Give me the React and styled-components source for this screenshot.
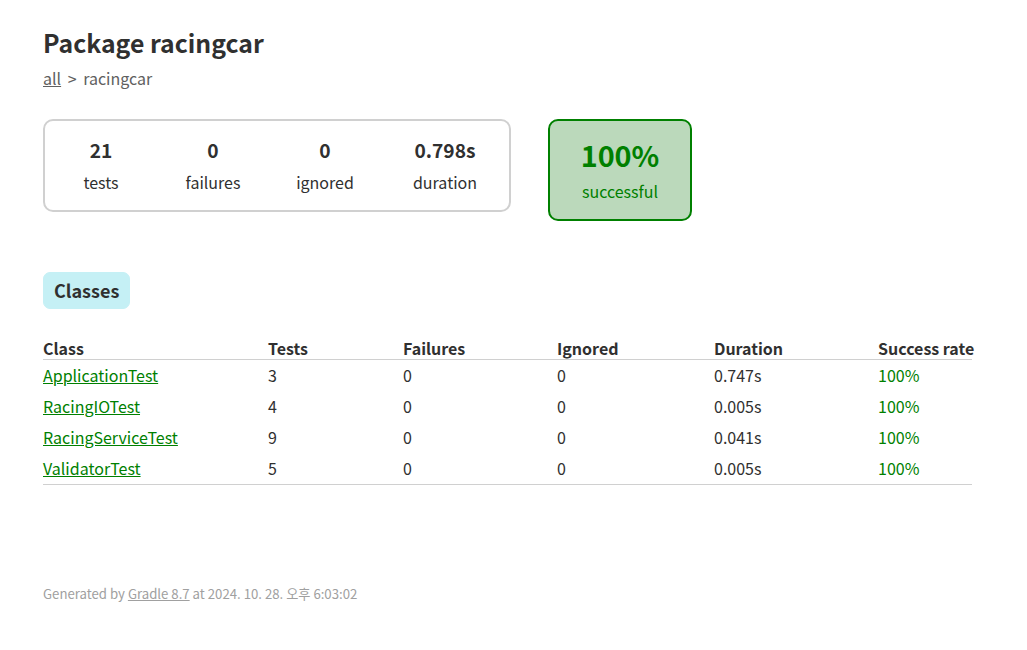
import React from "react";
import styled, { createGlobalStyle } from "styled-components";

const GlobalStyle = createGlobalStyle`
  html, body { margin: 0; padding: 0; background: #ffffff; }
  body {
    font-family: "Noto Sans CJK KR", "Noto Sans", sans-serif;
    font-size: 16px;
    color: #303030;
  }
`;

const Content = styled.div`
  padding: 24px 43px 30px 43px;
`;

const Title = styled.h1`
  margin: 0;
  font-size: 24.8px;
  line-height: 36px;
  font-weight: 700;
  white-space: nowrap;
`;

const Breadcrumbs = styled.div`
  margin-top: 7px;
  color: #606060;
  line-height: 22px;
  word-spacing: 3px;
  a { color: #606060; text-decoration: underline; }
`;

const Summary = styled.div`
  display: flex;
  align-items: flex-start;
  margin-top: 30px;
`;

const SummaryGroup = styled.div`
  display: flex;
  border: solid 2px #d0d0d0;
  border-radius: 10px;
`;

const InfoBox = styled.div`
  width: ${(p) => p.$w || 110}px;
  margin: 1px;
  padding: 16px 0;
  text-align: center;
  color: ${(p) => (p.$success ? "#008000" : "#303030")};
`;

const Counter = styled.div`
  font-size: ${(p) => (p.$big ? "28.8px" : "19.2px")};
  line-height: ${(p) => (p.$big ? "34px" : "25px")};
  font-weight: 700;
  margin-bottom: 8px;
`;

const Label = styled.div`
  line-height: 22px;
`;

const SuccessRate = styled.div`
  margin-left: 37px;
  border: solid 2px #008000;
  border-radius: 10px;
  background-color: #bbd9bb;
`;

const TabLinks = styled.ul`
  display: flex;
  margin: 0;
  padding: 51px 0 0 0;
  list-style: none;
`;

const Tab = styled.li`
  padding: 5px 10px;
  border-radius: 7px;
  border: solid 1px #c5f0f5;
  background-color: #c5f0f5;
`;

const TabTitle = styled.h2`
  margin: 0;
  font-size: 18px;
  line-height: 25px;
  font-weight: 700;
  white-space: nowrap;
`;

const Table = styled.table`
  margin-top: 29px;
  border-collapse: collapse;
  table-layout: fixed;
  width: 929px;
  border-bottom: solid #d0d0d0 1px;
`;

const Th = styled.th`
  width: ${(p) => p.$w}px;
  padding: 0;
  text-align: left;
  white-space: nowrap;
  font-weight: 700;
  line-height: 21px;
  border-bottom: solid #d0d0d0 1px;
`;

const Td = styled.td`
  padding: 5px 0;
  white-space: nowrap;
  line-height: 21px;
  color: ${(p) => (p.$success ? "#008000" : "#303030")};
`;

const ClassLink = styled.a`
  color: #008000;
  text-decoration: underline;
`;

const Footer = styled.div`
  margin-top: 100px;
  font-size: 13.2px;
  line-height: 18px;
  white-space: nowrap;
  color: #a0a0a0;
  a { color: #a0a0a0; text-decoration: underline; }
`;

const columns = [
  ["Class", 225],
  ["Tests", 135],
  ["Failures", 154],
  ["Ignored", 157],
  ["Duration", 164],
  ["Success rate", 94],
];

const rows = [
  ["ApplicationTest", "3", "0", "0", "0.747s", "100%"],
  ["RacingIOTest", "4", "0", "0", "0.005s", "100%"],
  ["RacingServiceTest", "9", "0", "0", "0.041s", "100%"],
  ["ValidatorTest", "5", "0", "0", "0.005s", "100%"],
];

export default function App() {
  return (
    <>
      <GlobalStyle />
      <Content>
        <Title>Package racingcar</Title>
        <Breadcrumbs>
          <a href="#">all</a> &gt; racingcar
        </Breadcrumbs>
        <Summary>
          <SummaryGroup>
            <InfoBox>
              <Counter>21</Counter>
              <Label>tests</Label>
            </InfoBox>
            <InfoBox>
              <Counter>0</Counter>
              <Label>failures</Label>
            </InfoBox>
            <InfoBox>
              <Counter>0</Counter>
              <Label>ignored</Label>
            </InfoBox>
            <InfoBox $w={126}>
              <Counter>0.798s</Counter>
              <Label>duration</Label>
            </InfoBox>
          </SummaryGroup>
          <SuccessRate>
            <InfoBox $w={138} $success>
              <Counter $big>100%</Counter>
              <Label>successful</Label>
            </InfoBox>
          </SuccessRate>
        </Summary>
        <TabLinks>
          <Tab>
            <TabTitle>Classes</TabTitle>
          </Tab>
        </TabLinks>
        <Table>
          <thead>
            <tr>
              {columns.map(([name, w]) => (
                <Th key={name} $w={w}>{name}</Th>
              ))}
            </tr>
          </thead>
          <tbody>
            {rows.map((r) => (
              <tr key={r[0]}>
                <Td>
                  <ClassLink href="#">{r[0]}</ClassLink>
                </Td>
                <Td>{r[1]}</Td>
                <Td>{r[2]}</Td>
                <Td>{r[3]}</Td>
                <Td>{r[4]}</Td>
                <Td $success>{r[5]}</Td>
              </tr>
            ))}
          </tbody>
        </Table>
        <Footer>
          Generated by <a href="#">Gradle 8.7</a> at 2024. 10. 28. 오후 6:03:02
        </Footer>
      </Content>
    </>
  );
}
